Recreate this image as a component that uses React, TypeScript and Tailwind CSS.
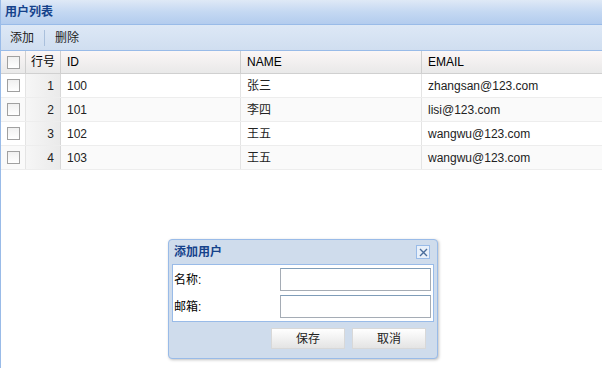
import React from 'react'

const ROWS = [
  { n: 1, id: '100', name: '张三', email: 'zhangsan@123.com' },
  { n: 2, id: '101', name: '李四', email: 'lisi@123.com' },
  { n: 3, id: '102', name: '王五', email: 'wangwu@123.com' },
  { n: 4, id: '103', name: '王五', email: 'wangwu@123.com' },
]

const font = { fontFamily: '"Liberation Sans", "Noto Sans CJK SC", sans-serif' }

function Check() {
  return <div className="w-[13px] h-[13px] border border-[#a0a0a0] bg-gradient-to-b from-[#f0f0f0] to-[#ffffff]" />
}

function Dialog() {
  return (
    <div className="absolute left-[167px] top-[239px] w-[270px] h-[120px] rounded-[4px] border border-[#99bbe8] bg-[#cfdcec] shadow-[1px_1px_3px_rgba(0,0,0,0.25)] flex flex-col px-[3px]">
      <div className="h-[24px] flex items-center justify-between pl-[2px] pr-[4px]">
        <span className="text-[12px] font-bold text-[#15428b]">添加用户</span>
        <div className="w-[14px] h-[14px] border border-[#99bbe8] bg-[#e8f0fa] flex items-center justify-center">
          <svg width="9" height="9" viewBox="0 0 9 9">
            <path d="M1 1 L8 8 M8 1 L1 8" stroke="#4a6d9c" strokeWidth="1.4" />
          </svg>
        </div>
      </div>
      <div className="h-[58px] border border-[#99bbe8] bg-white flex flex-col justify-center gap-[4px] pl-[1px]">
        <div className="flex items-center h-[23px]">
          <span className="w-[106px] text-[12px] text-black">名称:</span>
          <div className="w-[151px] h-[23px] border border-[#a5acb5] border-t-[#7f9db9] bg-white" />
        </div>
        <div className="flex items-center h-[23px]">
          <span className="w-[106px] text-[12px] text-black">邮箱:</span>
          <div className="w-[151px] h-[23px] border border-[#a5acb5] border-t-[#7f9db9] bg-white" />
        </div>
      </div>
      <div className="flex justify-end gap-[7px] pt-[6px] pr-[8px]">
        <button className="w-[74px] h-[21px] text-[12px] text-[#222] bg-gradient-to-b from-[#ffffff] to-[#e4e4e4] border border-[#d8d8d8]">保存</button>
        <button className="w-[74px] h-[21px] text-[12px] text-[#222] bg-gradient-to-b from-[#ffffff] to-[#e4e4e4] border border-[#d8d8d8]">取消</button>
      </div>
    </div>
  )
}

export default function App() {
  return (
    <div className="relative w-[602px] h-[368px] bg-white overflow-hidden border-l border-[#99bbe8]" style={font}>
      {/* title */}
      <div className="h-[25px] flex items-center px-[4px] bg-gradient-to-b from-[#dfe9f6] via-[#c4d8f2] to-[#b3ccee] border-b border-[#99bbe8]">
        <span className="text-[12px] font-bold text-[#15428b]">用户列表</span>
      </div>
      {/* toolbar */}
      <div className="h-[26px] flex items-center px-[9px] gap-[10px] bg-gradient-to-b from-[#dde8f6] to-[#d0def0] border-b border-[#99bbe8] text-[12px] text-[#222]">
        <span>添加</span>
        <div className="w-px h-[16px] bg-[#aac0dc]" />
        <span>删除</span>
      </div>
      {/* header */}
      <div className="h-[23px] flex items-center bg-gradient-to-b from-[#fbf6f6] to-[#e9e9e9] border-b border-[#d0d0d0] text-[12px] text-black">
        <div className="w-[25px] h-full flex items-center justify-center border-r border-[#cfcfcf]"><Check /></div>
        <div className="w-[35px] h-full flex items-center justify-center border-r border-[#cfcfcf]">行号</div>
        <div className="w-[180px] h-full flex items-center px-[6px] border-r border-[#cfcfcf]">ID</div>
        <div className="w-[181px] h-full flex items-center px-[6px] border-r border-[#cfcfcf]">NAME</div>
        <div className="flex-1 h-full flex items-center px-[6px]">EMAIL</div>
      </div>
      {ROWS.map((r, i) => (
        <div key={r.n} className={`h-[24px] flex items-center border-b border-[#ededed] text-[12px] text-[#222] ${i % 2 ? 'bg-[#fafafa]' : 'bg-white'}`}>
          <div className="w-[25px] h-full flex items-center justify-center border-r border-[#e4e4e4]"><Check /></div>
          <div className="w-[35px] h-full flex items-center justify-end pr-[6px] bg-gradient-to-r from-[#f6f6f6] to-[#eaeaea] border-r border-[#d8d8d8]">{r.n}</div>
          <div className="w-[180px] h-full flex items-center px-[6px] border-r border-[#e4e4e4]">{r.id}</div>
          <div className="w-[181px] h-full flex items-center px-[6px] border-r border-[#e4e4e4]">{r.name}</div>
          <div className="flex-1 h-full flex items-center px-[6px]">{r.email}</div>
        </div>
      ))}
      <Dialog />
    </div>
  )
}
